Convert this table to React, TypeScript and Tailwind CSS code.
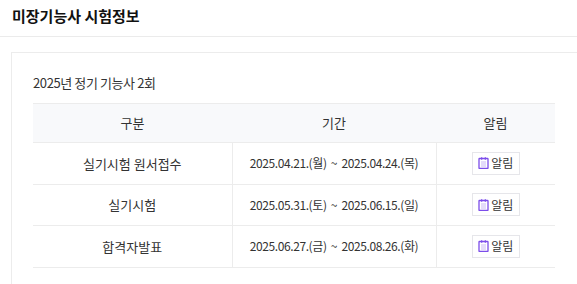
const rows = [
  { name: '실기시험 원서접수', period: '2025.04.21.(월) ~ 2025.04.24.(목)' },
  { name: '실기시험', period: '2025.05.31.(토) ~ 2025.06.15.(일)' },
  { name: '합격자발표', period: '2025.06.27.(금) ~ 2025.08.26.(화)' },
]

function NoteIcon() {
  return (
    <svg width="11" height="12" viewBox="0 0 11 12" fill="none">
      <rect x="1" y="1.5" width="9" height="10" rx="0.5" stroke="#7c4dea" strokeWidth="1.3" />
      <rect x="3" y="0.3" width="1.3" height="2.4" fill="#7c4dea" />
      <rect x="6.7" y="0.3" width="1.3" height="2.4" fill="#7c4dea" />
      <path d="M3 5h5M3 7h5M3 9h5" stroke="#c9b8f5" strokeWidth="1" />
    </svg>
  )
}

function AlarmButton() {
  return (
    <button className="h-[23px] w-[48px] flex items-center justify-center gap-[2px] border border-[#e6e6ea] bg-white text-[12px] text-[#333]">
      <NoteIcon />
      <span>알림</span>
    </button>
  )
}

export default function App() {
  return (
    <div
      className="w-[577px] h-[284px] overflow-hidden bg-white text-[#333]"
      style={{ fontFamily: '"Noto Sans CJK KR", "Noto Sans", sans-serif' }}
    >
      <div className="h-[37px] px-3 flex items-center border-b border-[#ebebeb]">
        <h1 className="text-[15px] font-bold text-[#111] leading-none -mt-[6px]">미장기능사 시험정보</h1>
      </div>

      <div className="mt-[15px] ml-[11px] w-[620px] h-[300px] border border-[#ececec] pl-[21px] pt-[20px]">
        <p className="text-[13px] leading-[19px] tracking-[-0.4px] text-[#333]">2025년 정기 기능사 2회</p>

        <table className="mt-[11px] w-[522px] border-collapse text-[13px] text-[#333]">
          <colgroup>
            <col className="w-[199px]" />
            <col className="w-[204px]" />
            <col className="w-[119px]" />
          </colgroup>
          <thead>
            <tr className="bg-[#f8f9fb] h-[39px] border-t border-b border-[#ececec]">
              <th className="font-normal">구분</th>
              <th className="font-normal">기간</th>
              <th className="font-normal">알림</th>
            </tr>
          </thead>
          <tbody>
            {rows.map((r) => (
              <tr key={r.name} className="h-[41.5px] border-b border-[#ececec]">
                <td className="text-center border-r border-[#ececec]">{r.name}</td>
                <td className="text-center border-r border-[#ececec] text-[12px] tracking-[-0.4px] [word-spacing:2px]">
                  {r.period}
                </td>
                <td>
                  <div className="flex justify-center">
                    <AlarmButton />
                  </div>
                </td>
              </tr>
            ))}
          </tbody>
        </table>
      </div>
    </div>
  )
}
